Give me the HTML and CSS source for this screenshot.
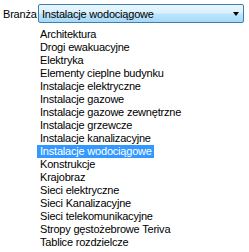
FILE: index.html
```html
<!DOCTYPE html>
<html lang="pl">
<head>
  <meta charset="UTF-8" />
  <title>Branża</title>
  <link rel="stylesheet" href="styles.css">
</head>
<body>
  <div class="field">
    <span class="label">Branża</span>
    <div class="combo">
      <span class="combo-text">Instalacje wodociągowe</span>
      <span class="arrow"></span>
    </div>
  </div>

  <ul class="options">
    <li>Architektura</li>
    <li>Drogi ewakuacyjne</li>
    <li>Elektryka</li>
    <li>Elementy cieplne budynku</li>
    <li>Instalacje elektryczne</li>
    <li>Instalacje gazowe</li>
    <li>Instalacje gazowe zewnętrzne</li>
    <li>Instalacje grzewcze</li>
    <li>Instalacje kanalizacyjne</li>
    <li class="selected">Instalacje wodociągowe</li>
    <li>Konstrukcje</li>
    <li>Krajobraz</li>
    <li>Sieci elektryczne</li>
    <li>Sieci Kanalizacyjne</li>
    <li>Sieci telekomunikacyjne</li>
    <li>Stropy gęstożebrowe Teriva</li>
    <li>Tablice rozdzielcze</li>
  </ul>
</body>
</html>
```

FILE: styles.css
```css
* {
  box-sizing: border-box;
}

body {
  margin: 0;
  background: #fff;
  font-family: 'Liberation Sans', Arial, sans-serif;
  font-size: 11px;
  letter-spacing: -0.2px;
  color: #000;
}

.field {
  display: flex;
  align-items: center;
  padding: 4px 0 0 3px;
}

.label {
  width: 35px;
}

.combo {
  display: flex;
  align-items: center;
  justify-content: space-between;
  width: 206px;
  height: 19px;
  padding: 0 4px 0 3px;
  border: 1px solid #3c7fb1;
  border-radius: 2px;
  background: linear-gradient(#eaf6fd 0%, #d9f0fc 48%, #bee6fd 52%, #a7d9f5 100%);
}

.arrow {
  width: 0;
  height: 0;
  border-left: 3.5px solid transparent;
  border-right: 3.5px solid transparent;
  border-top: 4px solid #000;
}

.options {
  list-style: none;
  margin: 5px 0 0;
  padding: 0 0 0 37px;
}

.options li {
  display: table;
  height: 13px;
  line-height: 13px;
  padding: 0 2px 0 3px;
}

.options li.selected {
  background: #3399ff;
  color: #fff;
}
```
